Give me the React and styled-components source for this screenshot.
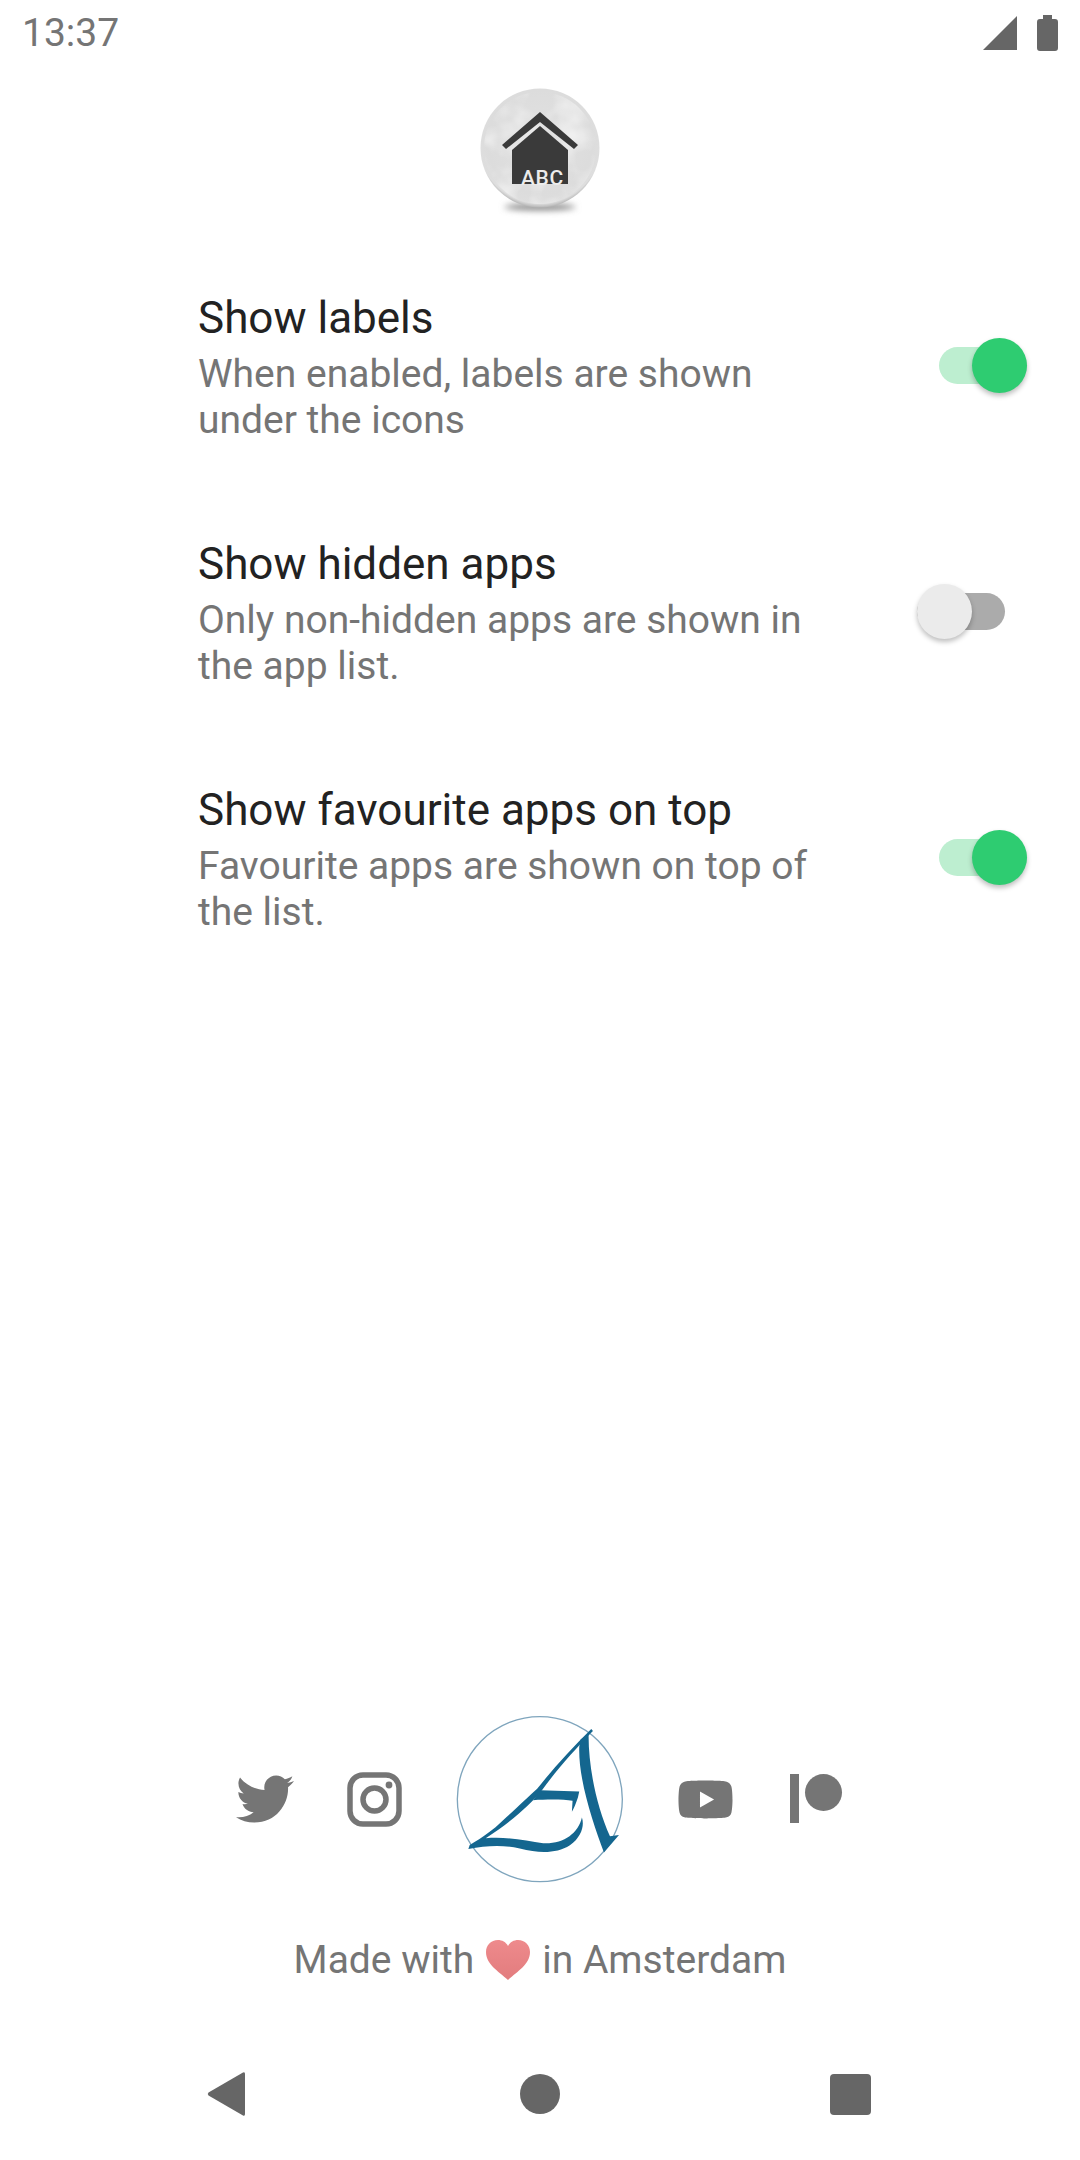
import React from 'react'
import styled, { createGlobalStyle } from 'styled-components'
import { FaTwitter, FaYoutube } from 'react-icons/fa'

const GREY = '#757575'

const GlobalStyle = createGlobalStyle`
  html, body {
    margin: 0;
    padding: 0;
    background: #fff;
  }
`

const Page = styled.div`
  display: flex;
  flex-direction: column;
  box-sizing: border-box;
  width: 1080px;
  height: 2160px;
  overflow: hidden;
  font-family: Roboto, "Liberation Sans", sans-serif;
`

const StatusBar = styled.div`
  display: flex;
  align-items: center;
  justify-content: space-between;
  box-sizing: border-box;
  height: 66px;
  padding: 0 22px;
`

const Clock = styled.span`
  font-size: 39px;
  color: ${GREY};
`

const StatusIcons = styled.div`
  display: flex;
  align-items: center;
  gap: 20px;
`

const LogoWrap = styled.div`
  display: flex;
  justify-content: center;
  margin-top: 22px;
`

const Settings = styled.div`
  display: flex;
  flex-direction: column;
  margin-top: 70px;
  gap: 93px;
`

const Row = styled.div`
  display: flex;
  align-items: center;
  justify-content: space-between;
  padding: 0 53px 0 198px;
`

const RowText = styled.div`
  width: 625px;
`

const Title = styled.div`
  font-size: 44px;
  line-height: 56px;
  color: #222;
`

const Subtitle = styled.div`
  margin-top: 5px;
  font-size: 39px;
  line-height: 46px;
  color: ${GREY};
`

const Track = styled.div`
  position: relative;
  width: 88px;
  height: 37px;
  margin-right: ${props => (props.$on ? 0 : 22)}px;
  margin-bottom: 3px;
  border-radius: 19px;
  background: ${props => (props.$on ? '#bdeed0' : '#ababab')};
`

const Thumb = styled.div`
  position: absolute;
  top: -9px;
  left: ${props => (props.$on ? 33 : 0)}px;
  width: 55px;
  height: 55px;
  border-radius: 50%;
  background: ${props => (props.$on ? '#2ecc71' : '#ebebeb')};
  box-shadow: 0 3px 5px rgba(0, 0, 0, 0.25);
`

const Footer = styled.div`
  display: flex;
  flex-direction: column;
  align-items: center;
  margin-top: auto;
`

const Socials = styled.div`
  display: flex;
  align-items: center;
  gap: 55px;
  color: ${GREY};
`

const SocialIcon = styled.div`
  display: flex;
  align-items: center;
  justify-content: center;
  width: 55px;
  height: 55px;

  svg {
    flex-shrink: 0;
  }
`

const Credit = styled.div`
  display: flex;
  align-items: center;
  gap: 12px;
  margin-top: 56px;
  font-size: 39px;
  line-height: 44px;
  color: ${GREY};
`

const NavBar = styled.div`
  display: flex;
  justify-content: center;
  align-items: center;
  gap: 270px;
  box-sizing: border-box;
  width: 100%;
  height: 132px;
  margin-top: 46px;
  padding-right: 2px;
`

const NavCircle = styled.div`
  width: 40px;
  height: 40px;
  margin-left: 4px;
  border-radius: 50%;
  background: #666;
`

const NavSquare = styled.div`
  width: 41px;
  height: 41px;
  border-radius: 4px;
  background: #666;
`

const SETTINGS = [
  {
    title: 'Show labels',
    text: 'When enabled, labels are shown under the icons',
    on: true,
  },
  {
    title: 'Show hidden apps',
    text: 'Only non-hidden apps are shown in the app list.',
    on: false,
  },
  {
    title: 'Show favourite apps on top',
    text: 'Favourite apps are shown on top of the list.',
    on: true,
  },
]

const HomeLogo = () => (
  <svg width="132" height="132" viewBox="0 0 132 132">
    <defs>
      <radialGradient id="disc" cx="50%" cy="45%" r="55%">
        <stop offset="0%" stopColor="#e2e2e2" />
        <stop offset="80%" stopColor="#dcdcdc" />
        <stop offset="94%" stopColor="#dedede" />
        <stop offset="100%" stopColor="#b5b5b5" />
      </radialGradient>
      <filter id="soft" x="-30%" y="-100%" width="160%" height="300%">
        <feGaussianBlur stdDeviation="3" />
      </filter>
      <filter id="marble" x="0" y="0" width="100%" height="100%">
        <feTurbulence type="fractalNoise" baseFrequency="0.035" numOctaves="3" seed="4" />
        <feColorMatrix values="0 0 0 0 1  0 0 0 0 1  0 0 0 0 1  1.1 0 0 0 -0.42" />
        <feComposite in2="SourceAlpha" operator="in" />
      </filter>
    </defs>
    <ellipse cx="66" cy="119" rx="36" ry="3.5" fill="#8a8a8a" filter="url(#soft)" />
    <circle cx="66" cy="60" r="59.5" fill="url(#disc)" />
    <circle cx="66" cy="60" r="56" fill="#fff" filter="url(#marble)" />
    <path d="M66 24 L104 57 L100 61 L66 34 L32 61 L28 57 Z" fill="#3a3a3a" />
    <path d="M66 38 L94 62 V96 H38 V62 Z" fill="#3a3a3a" />
    <text x="47" y="97" fontFamily="Roboto, sans-serif" fontSize="21" fontWeight="500" letterSpacing="0.6" fill="#ececec">
      ABC
    </text>
  </svg>
)

const SignalIcon = () => (
  <svg width="34" height="34" viewBox="0 0 34 34">
    <path d="M0 34 L34 0 L34 34 Z" fill="#666" />
  </svg>
)

const BatteryIcon = () => (
  <svg width="21" height="36" viewBox="0 0 21 36">
    <path d="M6 0 H15 V4 H18 Q21 4 21 7 V33 Q21 36 18 36 H3 Q0 36 0 33 V7 Q0 4 3 4 H6 Z" fill="#666" />
  </svg>
)

const InstagramIcon = () => (
  <svg width="55" height="55" viewBox="0 0 55 55">
    <rect x="3" y="3" width="49" height="49" rx="13" fill="none" stroke={GREY} strokeWidth="5.5" />
    <circle cx="27.5" cy="27.5" r="11.5" fill="none" stroke={GREY} strokeWidth="5.5" />
    <circle cx="42" cy="13" r="3.4" fill={GREY} />
  </svg>
)

const PatreonIcon = () => (
  <svg width="55" height="55" viewBox="0 0 55 55">
    <rect x="2" y="2" width="9" height="49" fill={GREY} />
    <circle cx="35.5" cy="20.5" r="18.5" fill={GREY} />
  </svg>
)

const AuthorLogo = () => (
  <svg width="166" height="166" viewBox="22 18 497 497" overflow="visible">
    <circle cx="270" cy="267" r="247" fill="none" stroke="#7fa5bd" strokeWidth="4" />
    <g fill="#14668f">
      <path d="M424 57 L429 63 C375 118 320 180 278 238 C240 285 190 330 108 384 C170 378 230 392 280 399 C340 402 385 370 396 322 C404 345 395 380 360 405 C320 430 270 430 210 415 C160 403 110 406 56 416 L60 404 C100 380 130 360 160 330 C200 295 235 260 262 236 C310 175 365 115 424 57 Z" />
      <path d="M392 88 L416 72 C415 170 440 290 480 378 L507 374 L462 427 C430 340 385 210 388 110 Z" />
      <path d="M272 240 L388 244 L384 262 C378 280 372 295 366 305 L368 272 C340 267 290 268 250 270 Z" />
    </g>
  </svg>
)

const HeartIcon = () => (
  <svg width="44" height="40" viewBox="0 0 44 40">
    <defs>
      <linearGradient id="heart" x1="0" y1="0" x2="0" y2="1">
        <stop offset="0%" stopColor="#ee8a8c" />
        <stop offset="100%" stopColor="#e27c7e" />
      </linearGradient>
    </defs>
    <path d="M22 40 C12 31 0 24 0 12 C0 5 5 0 12 0 C16 0 20 2 22 6 C24 2 28 0 32 0 C39 0 44 5 44 12 C44 24 32 31 22 40 Z" fill="url(#heart)" />
  </svg>
)

const BackIcon = () => (
  <svg width="39" height="46" viewBox="0 0 39 46">
    <path d="M36 1.5 Q38 0.5 38 3 V43 Q38 45.5 36 44.5 L1.5 24.5 Q0 23 1.5 21.5 Z" fill="#666" />
  </svg>
)

const App = () => (
  <Page>
    <GlobalStyle />
    <StatusBar>
      <Clock>13:37</Clock>
      <StatusIcons>
        <SignalIcon />
        <BatteryIcon />
      </StatusIcons>
    </StatusBar>
    <LogoWrap>
      <HomeLogo />
    </LogoWrap>
    <Settings>
      {SETTINGS.map(item => (
        <Row key={item.title}>
          <RowText>
            <Title>{item.title}</Title>
            <Subtitle>{item.text}</Subtitle>
          </RowText>
          <Track $on={item.on}>
            <Thumb $on={item.on} />
          </Track>
        </Row>
      ))}
    </Settings>
    <Footer>
      <Socials>
        <SocialIcon><FaTwitter size={58} /></SocialIcon>
        <SocialIcon><InstagramIcon /></SocialIcon>
        <AuthorLogo />
        <SocialIcon><FaYoutube size={57} /></SocialIcon>
        <SocialIcon><PatreonIcon /></SocialIcon>
      </Socials>
      <Credit>
        <span>Made with</span>
        <HeartIcon />
        <span>in Amsterdam</span>
      </Credit>
      <NavBar>
        <BackIcon />
        <NavCircle />
        <NavSquare />
      </NavBar>
    </Footer>
  </Page>
)

export default App
